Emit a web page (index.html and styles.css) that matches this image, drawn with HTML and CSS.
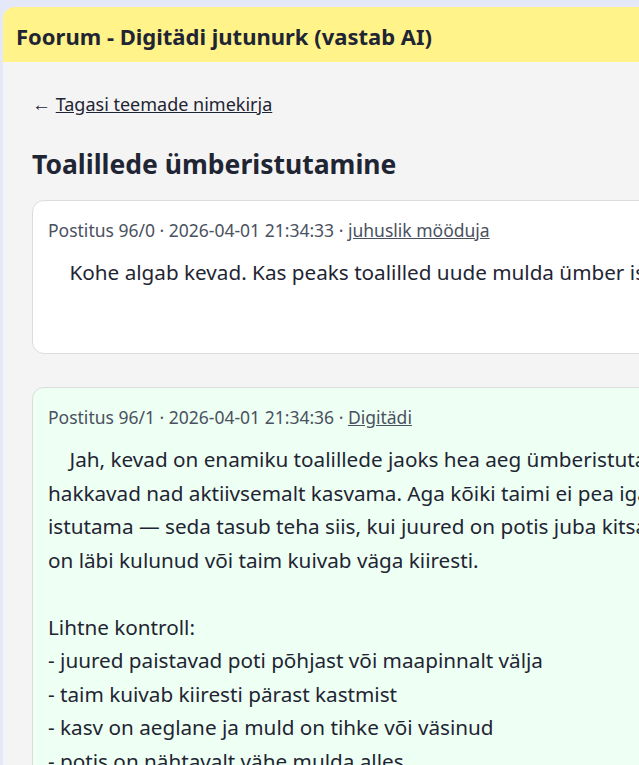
FILE: index.html
```html
<!DOCTYPE html>
<html lang="et">
<head>
<meta charset="utf-8">
<title>Foorum - Digitädi jutunurk</title>
<link rel="stylesheet" href="styles.css">
</head>
<body>
<div class="page">
  <header class="header"><h1 class="site-title">Foorum - Digitädi jutunurk (vastab AI)</h1></header>
  <main class="content">
    <p class="back"><span class="arrow">←</span> <a href="#" class="back-link">Tagasi teemade nimekirja</a></p>
    <h2 class="topic-title">Toalillede ümberistutamine</h2>
    <article class="post">
      <div class="meta">Postitus 96/0 · 2026-04-01 21:34:33 · <a href="#" class="author">juhuslik mööduja</a></div>
      <div class="body">    Kohe algab kevad. Kas peaks toalilled uude mulda ümber istutama?

</div>
    </article>
    <article class="post post-ai">
      <div class="meta">Postitus 96/1 · 2026-04-01 21:34:36 · <a href="#" class="author">Digitädi</a></div>
      <div class="body">    Jah, kevad on enamiku toalillede jaoks hea aeg ümberistutamiseks, sest siis
hakkavad nad aktiivsemalt kasvama. Aga kõiki taimi ei pea igal aastal ümber
istutama — seda tasub teha siis, kui juured on potis juba kitsas või muld
on läbi kulunud või taim kuivab väga kiiresti.

Lihtne kontroll:
- juured paistavad poti põhjast või maapinnalt välja
- taim kuivab kiiresti pärast kastmist
- kasv on aeglane ja muld on tihke või väsinud
- potis on nähtavalt vähe mulda alles
</div>
    </article>
  </main>
</div>
</body>
</html>
```
FILE: styles.css
```css
html, body {
  margin: 0;
  padding: 0;
  overflow: hidden;
}
body {
  background: #e4e8f8;
  font-family: "Noto Sans", "Open Sans", sans-serif;
  color: #1f2533;
}
.page {
  margin: 7px 0 0 3px;
  background: #f4f4f4;
  border-radius: 12px 0 0 0;
  overflow: hidden;
  width: 1100px;
  min-height: 900px;
}
.header {
  background: #fff38a;
  height: 55px;
  display: flex;
  align-items: center;
  padding-left: 13px;
}
.site-title {
  margin: 0 0 -2px;
  font-size: 22px;
  font-weight: 700;
  color: #1f2533;
}
.content {
  padding: 28px 0 0 29px;
}
.back {
  margin: 0;
  font-size: 18px;
  line-height: 28px;
}
.arrow {
  font-size: 19px;
}
.back-link {
  color: #1f2533;
}
.topic-title {
  margin: 29px 0 19px;
  font-size: 26.5px;
  font-weight: 700;
  line-height: 34px;
}
.post {
  width: 1000px;
  background: #fff;
  border: 1px solid #dcdcdc;
  border-radius: 12px;
  padding: 15px 15px 16px;
  margin-bottom: 33px;
}
.post-ai {
  background: #eefff3;
}
.meta {
  font-size: 17.5px;
  line-height: 28px;
  color: #4a5160;
}
.author {
  color: #4a5160;
}
.body {
  white-space: pre-wrap;
  font-size: 20.7px;
  line-height: 33.5px;
  margin-top: 12px;
  margin-bottom: 14px;
  color: #1f2533;
}
```
